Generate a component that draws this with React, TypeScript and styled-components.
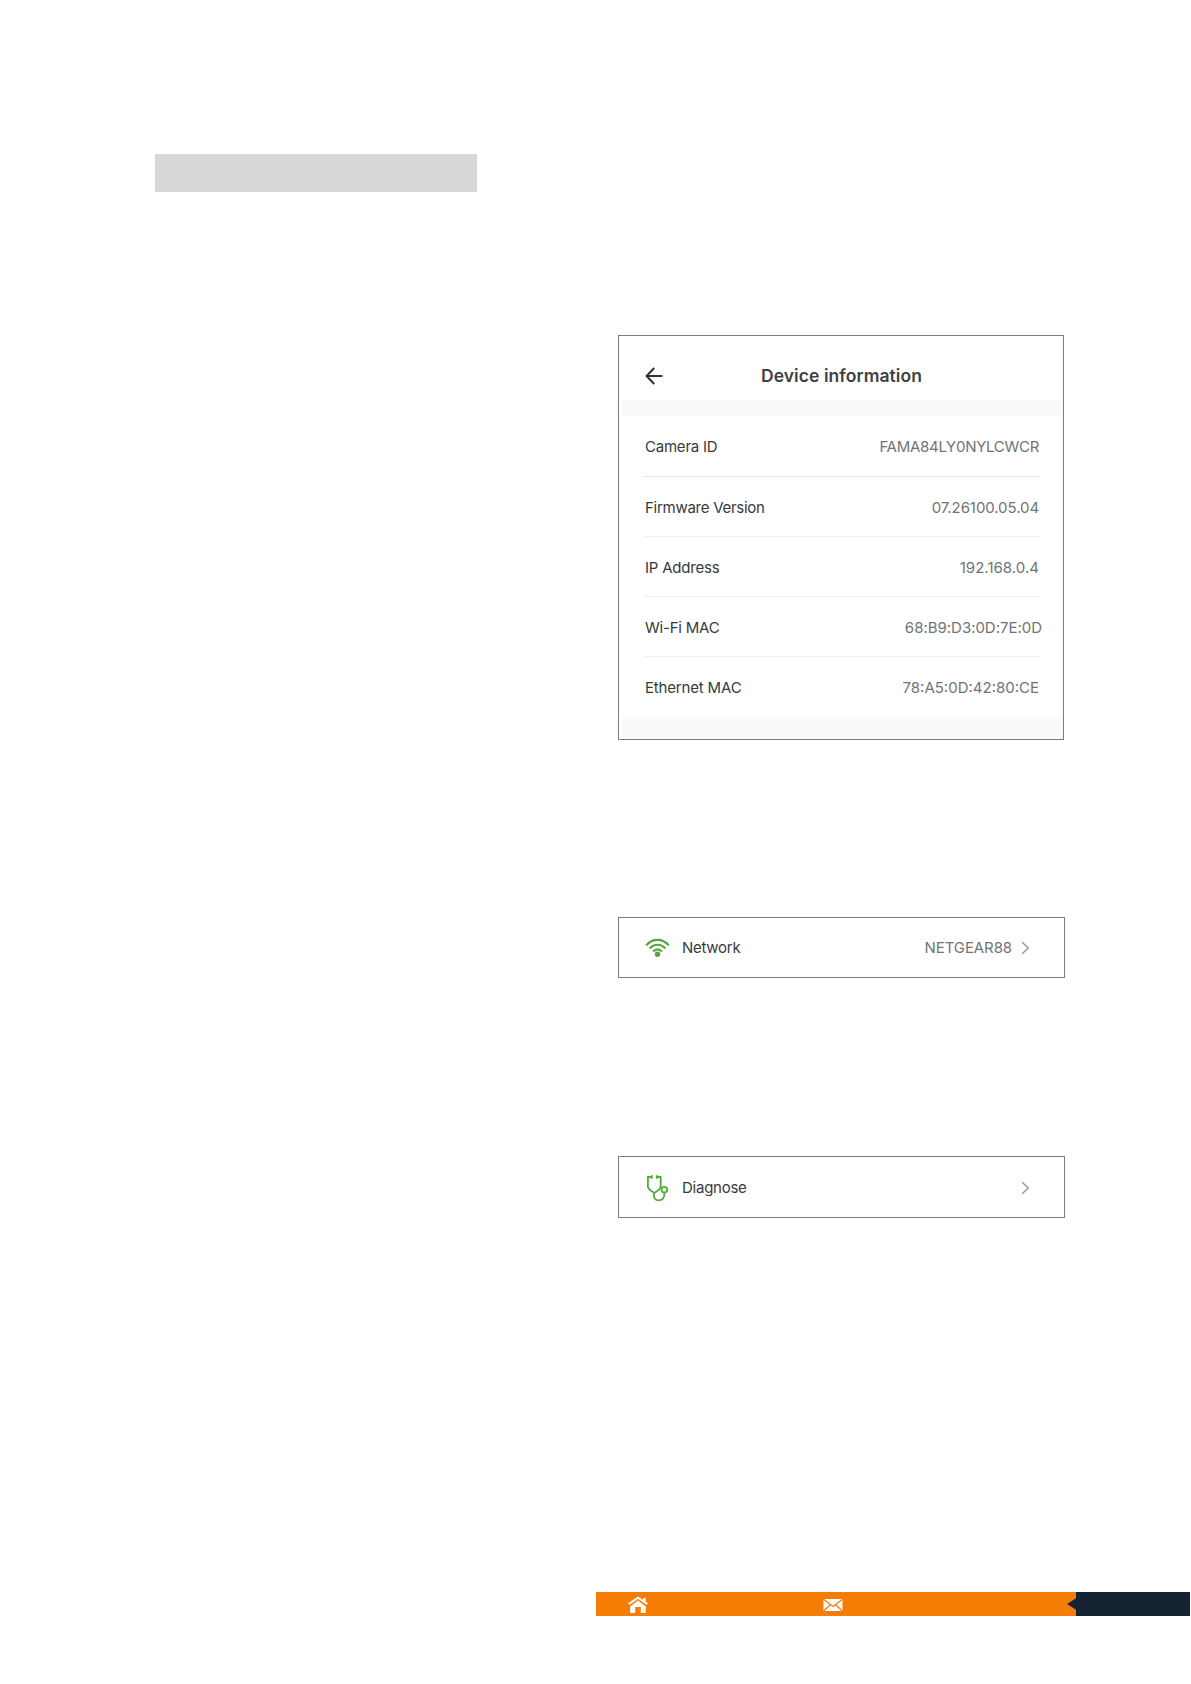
import { createGlobalStyle, styled } from "styled-components"

const GlobalStyle = createGlobalStyle`
  * {
    box-sizing: border-box;
  }

  body {
    margin: 0;
    background-color: #fff;
    font-family: Inter, "Liberation Sans", sans-serif;
  }
`

const Page = styled.div`
  width: 1191px;
  height: 1684px;
  padding-top: 154px;
  display: flex;
  flex-direction: column;
  overflow: hidden;
`

const Heading = styled.div`
  width: 322px;
  height: 38px;
  margin-left: 155px;
  background-color: #d8d8d8;
`

const Shots = styled.main`
  margin-top: 143px;
  margin-left: 618px;
  display: flex;
  flex-direction: column;
`

const DeviceCard = styled.section`
  width: 446px;
  height: 405px;
  border: 1px solid #7c7c7c;
`

const TitleBar = styled.header`
  height: 64px;
  padding-top: 15px;
  padding-left: 26px;
  display: flex;
  align-items: center;
`

const Title = styled.h1`
  margin: 1px 0 0 98px;
  font-size: 17.5px;
  font-weight: 600;
  line-height: 24px;
  letter-spacing: 0.06px;
  color: #3f4142;
  white-space: nowrap;
`

const Band = styled.div<{ $height: number }>`
  height: ${({ $height }) => $height}px;
  margin-left: 3px;
  background-color: #f9fafa;
`

const Row = styled.div`
  height: 60px;
  margin-left: 25px;
  margin-right: 23px;
  padding: 2px 1px 0;
  display: flex;
  align-items: center;
  justify-content: space-between;
  border-bottom: 1px solid #f0f0f1;

  &:first-of-type {
    height: 61px;
    border-bottom-color: #e3e4e4;
  }

  &:last-of-type {
    padding-top: 1px;
    border-bottom: 0;
  }
`

const Label = styled.span<{ $spacing?: number }>`
  font-size: 15px;
  line-height: 20px;
  letter-spacing: ${({ $spacing = 0 }) => $spacing}px;
  color: #363a3b;
  white-space: nowrap;
`

const Value = styled(Label)<{ $shift?: number }>`
  margin-right: ${({ $shift = 0 }) => -$shift}px;
  color: #707476;
`

const MenuCard = styled.section<{ $top: number; $height: number }>`
  width: 447px;
  height: ${({ $height }) => $height}px;
  margin-top: ${({ $top }) => $top}px;
  padding: 1px 34px 0 26px;
  border: 1px solid #7c7c7c;
  display: flex;
  align-items: center;

  & > svg:first-child {
    margin-right: 12px;
  }

  & > svg:last-child {
    margin-left: 9px;
  }

  & > ${Value} {
    margin-left: auto;
  }
`

const Spacer = styled.div`
  flex: 1;
`

const Footer = styled.footer`
  width: 594px;
  height: 24px;
  margin: auto 0 68px 596px;
  display: flex;
  background-color: #f57d05;
`

const Contacts = styled.div`
  flex: 1;
  padding-top: 1px;
  padding-left: 32px;
  display: flex;
  align-items: center;
  gap: 175px;
`

const PageTag = styled.div`
  width: 114px;
  background-color: #142433;
`

const ArrowTip = styled.svg`
  display: block;
`

const rows = [
  { label: "Camera ID", spacing: -0.22, value: "FAMA84LY0NYLCWCR", valueSpacing: -0.29 },
  { label: "Firmware Version", spacing: -0.27, value: "07.26100.05.04", valueSpacing: -0.08 },
  { label: "IP Address", spacing: -0.22, value: "192.168.0.4", valueSpacing: 0.03 },
  { label: "Wi-Fi MAC", spacing: -0.22, value: "68:B9:D3:0D:7E:0D", valueSpacing: -0.02, shift: 3 },
  { label: "Ethernet MAC", spacing: -0.17, value: "78:A5:0D:42:80:CE", valueSpacing: 0 },
]

function BackIcon() {
  return (
    <svg width="18" height="18" viewBox="0 0 18 18" fill="none" stroke="#303435" strokeWidth="2.1">
      <path d="M9.2 1 1.6 9l7.6 8M1.8 9h15.6" />
    </svg>
  )
}

function WifiIcon() {
  return (
    <svg width="25" height="20" viewBox="0 0 25 20" fill="none" stroke="#55a53f" strokeWidth="2.1">
      <path d="M1.2 7.4c6.3-7.4 16.3-7.4 22.6 0M4.7 10.5c4.4-5 11.2-5 15.6 0M8.1 13.6c2.5-3 6.3-3 8.8 0" />
      <circle cx="12.5" cy="16.2" r="2.7" fill="#55a53f" stroke="none" />
    </svg>
  )
}

function StethoscopeIcon() {
  return (
    <svg width="25" height="28" viewBox="0 0 25 28" fill="none" stroke="#55ad3c" strokeWidth="1.9">
      <path d="M6.8 3H2.9v9.6c0 2 2 3.9 6.4 6.4 4.4-2.5 6.4-4.4 6.4-6.4V3h-3.9M6.8 1.2v3.6M11.8 1.2v3.6" />
      <path d="M9.1 18.8c-1.2 5 1.2 7.6 4.7 7.6 3.8 0 6.1-3.2 5.5-7.8" />
      <circle cx="19.4" cy="15.7" r="2.8" />
    </svg>
  )
}

function ChevronIcon() {
  return (
    <svg width="9" height="14" viewBox="0 0 9 14" fill="none" stroke="#929697" strokeWidth="1.4">
      <path d="m1.2 1.2 6 5.8-6 5.8" />
    </svg>
  )
}

function HomeIcon() {
  return (
    <svg width="20" height="18" viewBox="0 0 20 18" fill="#fff">
      <path d="M10 4.6 2.2 10.6V17H7.2v-6h5.6v6h5v-6.4z" />
      <path d="M.7 8.1 10 1.6l9.3 6.5" fill="none" stroke="#fff" strokeWidth="1.9" />
      <path d="M15 2h2.6v4.6L15 4.8z" />
    </svg>
  )
}

function MailIcon() {
  return (
    <svg width="20" height="14" viewBox="0 0 20 14">
      <path d="M.5 1h19v12H.5z" fill="#fff" />
      <path d="m.5 1.3 9.5 7.2 9.5-7.2M.8 12.8l6.6-6M19.2 12.8l-6.6-6" fill="none" stroke="#f57d05" strokeWidth="1.3" />
    </svg>
  )
}

export default function App() {
  return (
    <>
      <GlobalStyle />
      <Page>
        <Heading />
        <Shots>
          <DeviceCard>
            <TitleBar>
              <BackIcon />
              <Title>Device information</Title>
            </TitleBar>
            <Band $height={16} />
            <section>
              {rows.map((row) => (
                <Row key={row.label}>
                  <Label $spacing={row.spacing}>{row.label}</Label>
                  <Value $spacing={row.valueSpacing} $shift={row.shift}>{row.value}</Value>
                </Row>
              ))}
            </section>
            <Band $height={22} />
          </DeviceCard>
          <MenuCard $top={177} $height={61}>
            <WifiIcon />
            <Label $spacing={-0.27}>Network</Label>
            <Value $spacing={-0.1}>NETGEAR88</Value>
            <ChevronIcon />
          </MenuCard>
          <MenuCard $top={178} $height={62}>
            <StethoscopeIcon />
            <Label $spacing={-0.25}>Diagnose</Label>
            <Spacer />
            <ChevronIcon />
          </MenuCard>
        </Shots>
        <Footer>
          <Contacts>
            <HomeIcon />
            <MailIcon />
          </Contacts>
          <ArrowTip width="9" height="24" viewBox="0 0 9 24" fill="#142433">
            <path d="m0 12 9-5.7v11.4z" />
          </ArrowTip>
          <PageTag />
        </Footer>
      </Page>
    </>
  )
}
